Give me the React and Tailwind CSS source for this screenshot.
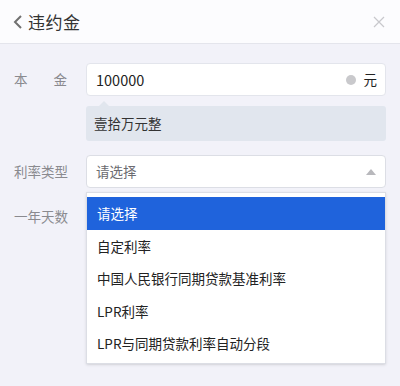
export default function App() {

    const options = ["请选择", "自定利率", "中国人民银行同期贷款基准利率", "LPR利率", "LPR与同期贷款利率自动分段"];

    let items = [];

    options.map((opt, i) => {
        items.push(
        <li key={opt} className={i === 0 ? "h-[32.5px] flex items-center px-[10px] bg-[#1f63dc] text-white" : "h-[32.5px] flex items-center px-[10px] text-[#222]"}>
            {opt}
        </li>
        );
    });

    return (
        <div className="w-[400px] h-[386px] bg-[#f2f2f9] overflow-hidden text-[13.5px]" style={{ fontFamily: '"Noto Sans CJK SC", "Noto Sans", sans-serif' }}>
            <header className="h-[44px] bg-[#fcfcfe] border-b border-[#e4e5ec] flex items-center px-[12px]">
                <svg width="12" height="16" viewBox="0 0 12 16" className="mr-[4px]">
                    <path d="M9 2 L3 8 L9 14" fill="none" stroke="#707070" strokeWidth="2" />
                </svg>
                <h1 className="text-[17px] text-[#333] tracking-[0.5px]">违约金</h1>
                <svg width="12" height="12" viewBox="0 0 12 12" className="ml-auto mr-[3px]">
                    <path d="M1 1 L11 11 M11 1 L1 11" stroke="#c8c8cc" strokeWidth="1.2" />
                </svg>
            </header>
            <main className="pl-[14px] pr-[14px] pt-[19px] flex flex-col">
                <div className="flex items-center">
                    <label className="w-[72px] flex justify-between pr-[19px] text-[#8a8a8f]">
                        <span>本</span><span>金</span>
                    </label>
                    <div className="flex-1 h-[33px] bg-white border border-[#e3e5ec] rounded-[4px] flex items-center pl-[9px] pr-[8px]">
                        <span className="text-[#222] text-[14.5px]">100000</span>
                        <span className="ml-auto w-[10px] h-[10px] rounded-full bg-[#c9c9cc] mr-[8px]"></span>
                        <span className="text-[#222]">元</span>
                    </div>
                </div>
                <div className="ml-[72px] mt-[10px] relative h-[35px] bg-[#e1e6ee] rounded-[3px] flex items-center pl-[8px] text-[#333]">
                    <span className="absolute -top-[5px] left-[13px] w-0 h-0 border-l-[5px] border-r-[5px] border-b-[5px] border-l-transparent border-r-transparent border-b-[#e1e6ee]"></span>
                    壹拾万元整
                </div>
                <div className="flex items-center mt-[14px] relative">
                    <label className="w-[72px] text-[#8a8a8f]">利率类型</label>
                    <div className="flex-1 h-[33px] bg-white border border-[#dcdee5] rounded-[4px] flex items-center pl-[9px] pr-[8px]">
                        <span className="text-[#6b6b70]">请选择</span>
                        <svg width="10" height="6" viewBox="0 0 10 6" className="ml-auto mr-[1px]">
                            <path d="M0 6 L5 0 L10 6 Z" fill="#b8b8bc" />
                        </svg>
                    </div>
                    <ul className="absolute left-[72px] right-0 top-[37px] z-10 bg-white border border-[#dcdee5] shadow-sm pt-[4px] pb-[3px]">
                        {items}
                    </ul>
                </div>
                <div className="flex items-center mt-[12px] h-[33px]">
                    <label className="w-[72px] text-[#8a8a8f]">一年天数</label>
                </div>
            </main>
        </div>
    )
}
